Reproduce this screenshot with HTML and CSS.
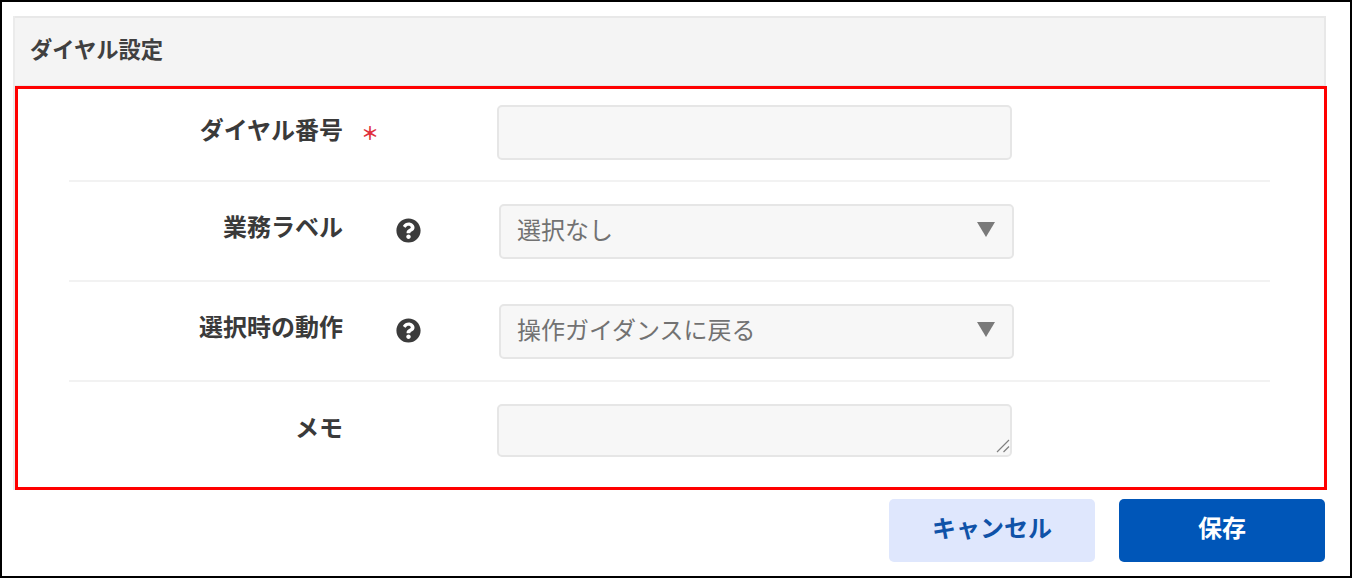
FILE: index.html
```html
<!DOCTYPE html>
<html lang="ja">
<head>
<meta charset="utf-8">
<title>ダイヤル設定</title>
<link rel="stylesheet" href="styles.css">
</head>
<body>
<div class="frame">
  <section class="panel">
    <h2 class="panel-title">ダイヤル設定</h2>
    <form class="panel-body">
      <div class="row row-first">
        <label class="label">ダイヤル番号</label>
        <span class="aside"><span class="required">＊</span></span>
        <input class="field" type="text">
      </div>
      <div class="row">
        <label class="label">業務ラベル</label>
        <span class="aside">
          <svg class="help" viewBox="0 0 512 512"><path d="M504 256c0 136.997-111.043 248-248 248S8 392.997 8 256C8 119.083 119.043 8 256 8s248 111.083 248 248zM262.655 90c-54.497 0-89.255 22.957-116.549 63.758-3.536 5.286-2.353 12.415 2.715 16.258l34.699 26.31c5.205 3.947 12.621 3.008 16.665-2.122 17.864-22.658 30.113-35.797 57.303-35.797 20.429 0 45.698 13.148 45.698 32.958 0 14.976-12.363 22.667-32.534 33.976C247.128 238.528 216 254.941 216 296v4c0 6.627 5.373 12 12 12h56c6.627 0 12-5.373 12-12v-1.333c0-28.462 83.186-29.647 83.186-106.667 0-58.002-60.165-102-116.531-102zM256 338c-25.365 0-46 20.635-46 46 0 25.364 20.635 46 46 46s46-20.636 46-46c0-25.365-20.635-46-46-46z"/></svg>
        </span>
        <div class="select-wrap"><select class="select"><option>選択なし</option></select></div>
      </div>
      <div class="row">
        <label class="label">選択時の動作</label>
        <span class="aside">
          <svg class="help" viewBox="0 0 512 512"><path d="M504 256c0 136.997-111.043 248-248 248S8 392.997 8 256C8 119.083 119.043 8 256 8s248 111.083 248 248zM262.655 90c-54.497 0-89.255 22.957-116.549 63.758-3.536 5.286-2.353 12.415 2.715 16.258l34.699 26.31c5.205 3.947 12.621 3.008 16.665-2.122 17.864-22.658 30.113-35.797 57.303-35.797 20.429 0 45.698 13.148 45.698 32.958 0 14.976-12.363 22.667-32.534 33.976C247.128 238.528 216 254.941 216 296v4c0 6.627 5.373 12 12 12h56c6.627 0 12-5.373 12-12v-1.333c0-28.462 83.186-29.647 83.186-106.667 0-58.002-60.165-102-116.531-102zM256 338c-25.365 0-46 20.635-46 46 0 25.364 20.635 46 46 46s46-20.636 46-46c0-25.365-20.635-46-46-46z"/></svg>
        </span>
        <div class="select-wrap"><select class="select"><option>操作ガイダンスに戻る</option></select></div>
      </div>
      <div class="row row-last">
        <label class="label">メモ</label>
        <span class="aside"></span>
        <div class="area-wrap">
          <textarea class="field field-area"></textarea>
          <svg class="grip" viewBox="0 0 14 14"><path d="M1 13 13 1M7.500 13 13 7.500"/></svg>
        </div>
      </div>
    </form>
  </section>
  <div class="actions">
    <button class="btn btn-cancel" type="button">キャンセル</button>
    <button class="btn btn-save" type="button">保存</button>
  </div>
</div>
</body>
</html>
```
FILE: styles.css
```css
* { box-sizing: border-box; }
html, body { margin: 0; padding: 0; }
body {
  font-family: "Noto Sans CJK JP", "Noto Sans", sans-serif;
  color: #333;
  background: #fff;
}
.frame {
  width: 1352px;
  height: 578px;
  border: 2px solid #000;
  padding: 14px 24px 0 11px;
  overflow: hidden;
}
.panel {
  border-left: 2px solid #ebebeb;
}
.panel-title {
  margin: 0;
  height: 70px;
  padding: 0 0 8px 15px;
  display: flex;
  align-items: center;
  font-size: 22.3px;
  font-weight: 700;
  color: #404040;
  background: #f4f4f4;
  border-top: 2px solid #e8e8e8;
  border-right: 2px solid #e8e8e8;
  border-bottom: 1px solid #e8e8e8;
}
.panel-body {
  display: block;
  margin-right: -1px;
  height: 404px;
  border: 3px solid #f00;
  padding: 0 54px 0 51px;
  background: #fff;
}
.row {
  display: grid;
  grid-template-columns: 274px 155px 1fr;
  height: 100px;
  padding-top: 22px;
  border-bottom: 2px solid #f2f2f2;
}
.row-first { height: 93px; padding-top: 16px; }
.row-last { border-bottom: 0; height: 105px; }
.label {
  font-size: 24px;
  font-weight: 700;
  line-height: 32px;
  text-align: right;
  margin-top: 6px;
  color: #3a3a3a;
}
.row-first .label { margin-top: 8px; }
.row-last .label { margin-top: 7px; }
.aside { display: flex; align-items: flex-start; }
.required {
  margin: 13px 0 0 18px;
  color: #e0303c;
  font-size: 18px;
  line-height: 28px;
  font-weight: 700;
}
.help {
  width: 25px;
  height: 25px;
  margin: 14px 0 0 53px;
  fill: #3b3b3b;
}
.field {
  display: block;
  width: 515px;
  height: 55px;
  margin-left: -1px;
  background: #f7f7f7;
  border: 2px solid #e6e6e6;
  border-radius: 5px;
  font: inherit;
  outline: none;
}
.area-wrap { position: relative; }
.field-area { height: 53px; resize: none; }
.grip {
  position: absolute;
  left: 498px;
  top: 35px;
  width: 14px;
  height: 14px;
  fill: none;
  stroke: #808080;
  stroke-width: 1.200;
  pointer-events: none;
}
.select-wrap {
  position: relative;
  width: 515px;
  height: 55px;
  margin-left: 1px;
}
.select-wrap::after {
  content: "";
  position: absolute;
  right: 19px;
  top: 18px;
  border-style: solid;
  border-width: 15px 9px 0;
  border-color: #7a7a7a transparent transparent;
}
.select {
  appearance: none;
  width: 100%;
  height: 100%;
  padding: 0 40px 6px 16px;
  background: #f7f7f7;
  border: 2px solid #e6e6e6;
  border-radius: 5px;
  font: inherit;
  font-size: 24px;
  line-height: 32px;
  color: #727272;
  outline: none;
}
.actions {
  display: flex;
  justify-content: flex-end;
  gap: 24px;
  padding-top: 9px;
  margin-right: 1px;
}
.btn {
  width: 206px;
  height: 63px;
  border: 0;
  border-radius: 5px;
  font-family: inherit;
  font-size: 24px;
  font-weight: 700;
  padding: 0 0 8px;
}
.btn-cancel { background: #dfe7fd; color: #0f52a8; }
.btn-save { background: #0056b8; color: #fff; }
```
